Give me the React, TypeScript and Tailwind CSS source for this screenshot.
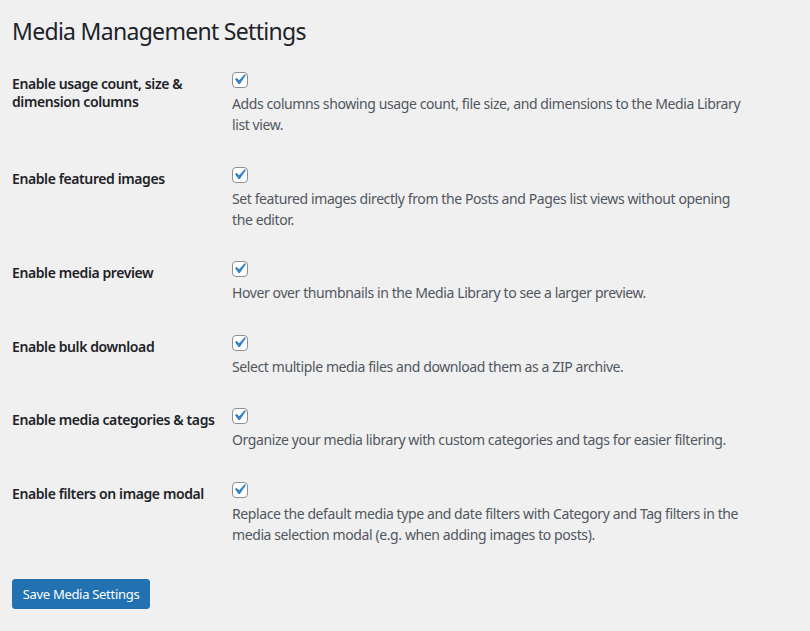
import React from "react";

const rows: { label: string; desc: string }[] = [
  {
    label: "Enable usage count, size & dimension columns",
    desc: "Adds columns showing usage count, file size, and dimensions to the Media Library list view.",
  },
  {
    label: "Enable featured images",
    desc: "Set featured images directly from the Posts and Pages list views without opening the editor.",
  },
  {
    label: "Enable media preview",
    desc: "Hover over thumbnails in the Media Library to see a larger preview.",
  },
  {
    label: "Enable bulk download",
    desc: "Select multiple media files and download them as a ZIP archive.",
  },
  {
    label: "Enable media categories & tags",
    desc: "Organize your media library with custom categories and tags for easier filtering.",
  },
  {
    label: "Enable filters on image modal",
    desc: "Replace the default media type and date filters with Category and Tag filters in the media selection modal (e.g. when adding images to posts).",
  },
];

function Checkbox() {
  return (
    <div className="relative w-[16px] h-[16px] rounded-[4px] border border-[#8c8f94] bg-white">
      <svg
        viewBox="0 0 20 20"
        className="absolute left-[-4px] top-[-4px] w-[21px] h-[21px]"
      >
        <path
          d="M14.83 4.89l1.34.94-5.81 8.38H9.02L5.78 9.67l1.34-1.25 2.57 2.4z"
          fill="#3582c4"
        />
      </svg>
    </div>
  );
}

export default function App() {
  return (
    <div
      className="min-h-screen bg-[#f0f0f1] pl-[12px] text-[#1d2327]"
      style={{ fontFamily: '"Noto Sans", "Open Sans", sans-serif' }}
    >
      <h1 className="pt-[16px] mb-[11px] text-[23px] leading-[30px] font-normal tracking-[-0.7px]">
        Media Management Settings
      </h1>
      <div>
        {rows.map((r) => (
          <div key={r.label} className="flex items-start">
            <div className="w-[220px] shrink-0 pr-[16px] pt-[18px] text-[14px] leading-[18.2px] font-semibold tracking-[-0.4px]">
              {r.label}
            </div>
            <div className="pt-[15px] pb-[16.5px]">
              <Checkbox />
              <p className="mt-[5px] max-w-[512px] text-[14px] leading-[21px] text-[#50575e] tracking-[-0.4px]">
                {r.desc}
              </p>
            </div>
          </div>
        ))}
      </div>
      <button className="mt-[18px] h-[30px] w-[138px] rounded-[3px] bg-[#2271b1] border border-[#2271b1] text-white text-[13px] leading-[28px] tracking-[-0.3px]">
        Save Media Settings
      </button>
    </div>
  );
}
